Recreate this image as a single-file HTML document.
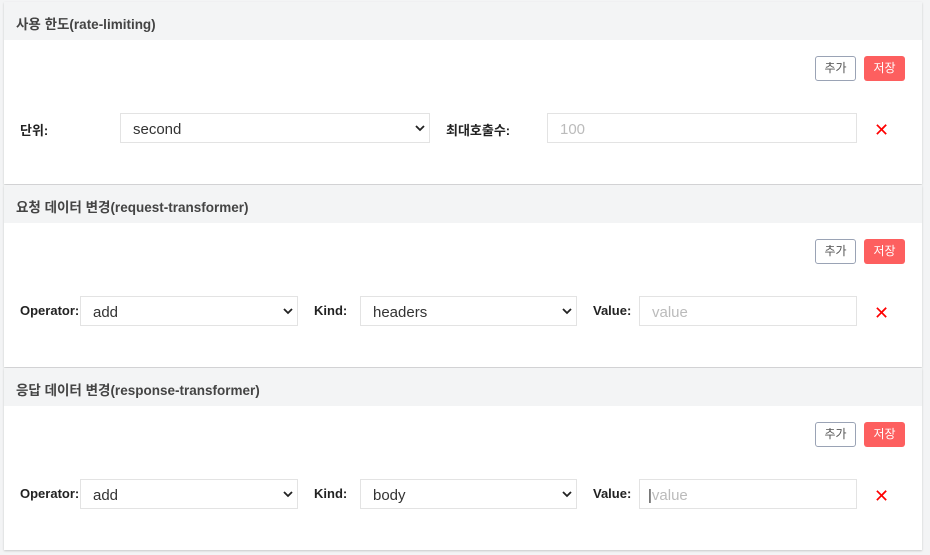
<!DOCTYPE html>
<html><head><meta charset="utf-8"><style>
*{box-sizing:border-box;margin:0;padding:0}
body{width:930px;height:555px;background:#f3f4f5;font-family:"Liberation Sans","Noto Sans CJK KR",sans-serif;position:relative;overflow:hidden;color:#222}
.panel{position:absolute;left:4px;width:918px;background:#fff;box-shadow:0 1px 2px rgba(0,0,0,.18)}
.hd{height:38px;background:#f3f4f5;font-size:13.5px;font-weight:bold;color:#444;padding:11px 0 0 12px}
.btn{position:absolute;height:25px;width:41px;border-radius:3px;font-size:12px;text-align:center;line-height:23px}
.b1{border:1px solid #9aa3b5;color:#555;background:#fff}
.b2{background:#fd5f5f;color:#fff;line-height:25px}
.lbl{position:absolute;font-size:13px;font-weight:bold;color:#222}
.sel,.inp{position:absolute;height:30px;border:1px solid #e3e3e3;background:#fff;font-size:15px;padding:7px 12px 5px;color:#333}
.inp{color:#bbb}
.sel svg{position:absolute;right:4px;top:11px}
.x{position:absolute;color:#f00;font-size:18px}
</style></head><body>

<div class="panel" style="top:2px;height:182px">
<div class="hd">사용 한도(rate-limiting)</div>
<div class="btn b1" style="left:811px;top:54px">추가</div>
<div class="btn b2" style="left:860px;top:54px">저장</div>
<div class="lbl" style="left:16px;top:118px">단위:</div>
<div class="sel" style="left:116px;top:111px;width:310px">second<svg width="10" height="7"><path d="M1 1l4 4 4-4" stroke="#222" stroke-width="1.8" fill="none"/></svg></div>
<div class="lbl" style="left:442px;top:118px">최대호출수:</div>
<div class="inp" style="left:543px;top:111px;width:310px">100</div>
<div class="x" style="left:870px;top:118px">✕</div>
</div>

<div class="panel" style="top:185px;height:182px">
<div class="hd">요청 데이터 변경(request-transformer)</div>
<div class="btn b1" style="left:811px;top:54px">추가</div>
<div class="btn b2" style="left:860px;top:54px">저장</div>
<div class="lbl" style="left:16px;top:118px">Operator:</div>
<div class="sel" style="left:76px;top:111px;width:218px">add<svg width="10" height="7"><path d="M1 1l4 4 4-4" stroke="#222" stroke-width="1.8" fill="none"/></svg></div>
<div class="lbl" style="left:310px;top:118px">Kind:</div>
<div class="sel" style="left:356px;top:111px;width:217px">headers<svg width="10" height="7"><path d="M1 1l4 4 4-4" stroke="#222" stroke-width="1.8" fill="none"/></svg></div>
<div class="lbl" style="left:589px;top:118px">Value:</div>
<div class="inp" style="left:635px;top:111px;width:218px">value</div>
<div class="x" style="left:870px;top:118px">✕</div>
</div>

<div class="panel" style="top:368px;height:182px">
<div class="hd">응답 데이터 변경(response-transformer)</div>
<div class="btn b1" style="left:811px;top:54px">추가</div>
<div class="btn b2" style="left:860px;top:54px">저장</div>
<div class="lbl" style="left:16px;top:118px">Operator:</div>
<div class="sel" style="left:76px;top:111px;width:218px">add<svg width="10" height="7"><path d="M1 1l4 4 4-4" stroke="#222" stroke-width="1.8" fill="none"/></svg></div>
<div class="lbl" style="left:310px;top:118px">Kind:</div>
<div class="sel" style="left:356px;top:111px;width:217px">body<svg width="10" height="7"><path d="M1 1l4 4 4-4" stroke="#222" stroke-width="1.8" fill="none"/></svg></div>
<div class="lbl" style="left:589px;top:118px">Value:</div>
<div class="inp" style="left:635px;top:111px;width:218px;padding-left:8px"><span style="color:#333">|</span>value</div>
<div class="x" style="left:870px;top:118px">✕</div>
</div>
</body></html>
